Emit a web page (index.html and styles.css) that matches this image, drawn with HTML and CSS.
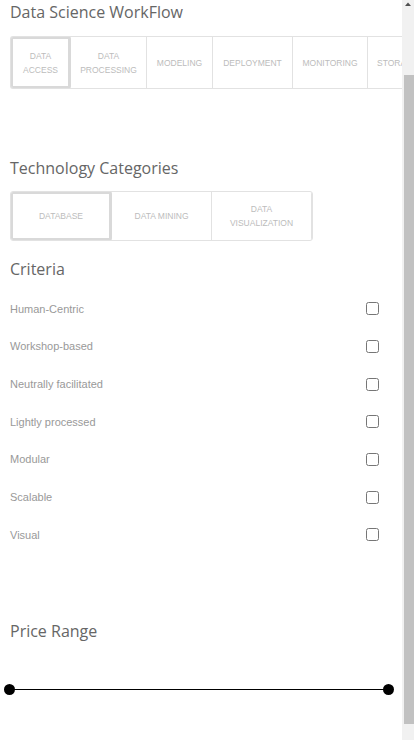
FILE: index.html
```html
<!DOCTYPE html>
<html>
<head>
<meta charset="utf-8">
<link rel="stylesheet" href="styles.css">
</head>
<body>
<div class="app">
  <main class="page">
    <h2 class="title first">Data Science WorkFlow</h2>
    <div class="tabs wf">
      <div class="tab active w-access">Data<br>Access</div>
      <div class="tab w-processing">Data<br>Processing</div>
      <div class="tab w-modeling">Modeling</div>
      <div class="tab w-deployment">Deployment</div>
      <div class="tab w-monitoring">Monitoring</div>
      <div class="tab w-storage">Storage</div>
    </div>

    <h2 class="title tech">Technology Categories</h2>
    <div class="tabs cat">
      <div class="tab active">Database</div>
      <div class="tab">Data Mining</div>
      <div class="tab">Data<br>Visualization</div>
    </div>

    <h2 class="title crit">Criteria</h2>
    <ul class="criteria">
      <li class="row"><span>Human-Centric</span><input type="checkbox"></li>
      <li class="row"><span>Workshop-based</span><input type="checkbox"></li>
      <li class="row"><span>Neutrally facilitated</span><input type="checkbox"></li>
      <li class="row"><span>Lightly processed</span><input type="checkbox"></li>
      <li class="row"><span>Modular</span><input type="checkbox"></li>
      <li class="row"><span>Scalable</span><input type="checkbox"></li>
      <li class="row"><span>Visual</span><input type="checkbox"></li>
    </ul>

    <h2 class="title price">Price Range</h2>
    <div class="slider">
      <span class="knob"></span>
      <span class="track"></span>
      <span class="knob"></span>
    </div>
  </main>
  <div class="scrollbar">
    <div class="arrow"><svg width="12" height="8" viewBox="0 0 12 8"><path d="M3 6 L6 2.5 L9 6 Z" fill="#505050"/></svg></div>
    <div class="gap-top"></div>
    <div class="thumb"></div>
    <div class="gap-bottom"></div>
  </div>
</div>
</body>
</html>
```
FILE: styles.css
```css
body {
  margin: 0;
  font-family: "Liberation Sans", Arial, sans-serif;
  background: #fff;
}
.app {
  display: flex;
  height: 740px;
  overflow: hidden;
}
.page {
  flex: 1;
  min-width: 0;
  padding: 1px 0 0 10px;
}
.title {
  margin: 0;
  font-family: "Open Sans", "Noto Sans", sans-serif;
  font-weight: 400;
  font-size: 16px;
  line-height: 22px;
  color: #666;
}
.tabs {
  display: flex;
  overflow: hidden;
  border: 1px solid #e2e2e2;
  border-radius: 3px;
}
.wf {
  margin-top: 13px;
  height: 51px;
  border-right: none;
  border-radius: 3px 0 0 3px;
}
.tab {
  flex: none;
  box-sizing: border-box;
  display: flex;
  align-items: center;
  justify-content: center;
  text-align: center;
  text-transform: uppercase;
  font-size: 8.5px;
  line-height: 14px;
  color: #bcbcbc;
  border-right: 1px solid #e2e2e2;
  padding: 0;
  white-space: nowrap;
}
.tab.active {
  border: 3px solid #d9d9d9;
  border-radius: 3px;
  margin: -1px 0 -1px -1px;
}
.w-access { width: 61px; }
.w-processing { width: 76px; }
.w-modeling { width: 66px; }
.w-deployment { width: 80px; }
.w-monitoring { width: 75px; }
.w-storage { width: 66px; justify-content: flex-start; padding-left: 9px; }
.tech {
  margin-top: 68px;
}
.cat {
  margin-top: 12px;
  width: 301px;
  height: 48px;
}
.cat .tab {
  width: 100px;
}
.cat .tab.active {
  width: 102px;
}
.crit {
  margin-top: 17px;
}
.criteria {
  list-style: none;
  margin: 10px 0 0;
  padding: 0 24px 0 0;
}
.row {
  display: flex;
  align-items: center;
  justify-content: space-between;
  height: 37.65px;
  font-size: 11px;
  color: #999;
}
.row input {
  width: 13px;
  height: 13px;
  margin: 0 -1px 0 0;
}
.price {
  margin-top: 67px;
}
.slider {
  display: flex;
  align-items: center;
  width: 390px;
  margin: 41px 0 0 -6px;
  height: 12px;
}
.knob {
  width: 11px;
  height: 11px;
  border-radius: 50%;
  background: #000;
  flex: none;
}
.track {
  flex: 1;
  height: 1px;
  background: #000;
  margin: 0 -1px;
}
.scrollbar {
  flex: none;
  width: 12px;
  display: flex;
  flex-direction: column;
  background: #f1f1f1;
}
.arrow {
  height: 17px;
  display: flex;
  justify-content: center;
}
.gap-top {
  height: 58px;
}
.thumb {
  height: 649px;
  margin-left: 2px;
  background: #c1c1c1;
}
.gap-bottom {
  flex: 1;
}
```
